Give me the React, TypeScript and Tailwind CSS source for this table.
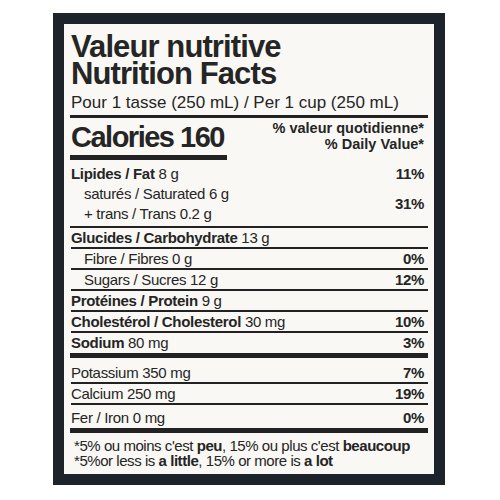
const font = { fontFamily: '"Liberation Sans", Arial, sans-serif' };

type Row = {
  bold?: string;
  text: string;
  dv?: string;
  indent?: boolean;
};

const carbRows: Row[] = [
  { bold: "Glucides / Carbohydrate", text: " 13 g" },
  { text: "Fibre / Fibres 0 g", dv: "0%", indent: true },
  { text: "Sugars / Sucres 12 g", dv: "12%", indent: true },
  { bold: "Protéines / Protein", text: " 9 g" },
  { bold: "Cholestérol / Cholesterol", text: " 30 mg", dv: "10%" },
];

function NutrientRow({ row }: { row: Row }) {
  return (
    <div className="flex h-[19px] items-center justify-between leading-[19px]">
      <span className={row.indent ? "pl-[13px]" : ""}>
        {row.bold && <b className="font-bold">{row.bold}</b>}
        {row.text}
      </span>
      {row.dv && <b className="pr-[4px] font-bold">{row.dv}</b>}
    </div>
  );
}

function Rule({ h = "h-[2px]" }: { h?: string }) {
  return <div className={`${h} w-full bg-[#222]`} />;
}

export default function App() {
  return (
    <div className="h-[500px] w-[500px] bg-white pl-[53px] pt-[13px]" style={font}>
      <div className="h-[472px] w-[392px] bg-[#1d232a] p-[11px]">
        <div className="h-full w-full bg-[#f9f8f4] px-[6px] text-[#252525]">
          {/* title */}
          <div className="pl-[1px] pt-[9px] text-[31px] font-bold leading-[27px] tracking-[-0.9px]">
            <div>Valeur nutritive</div>
            <div>Nutrition Facts</div>
          </div>
          <div className="mt-[6px] pl-[1px] text-[17px] leading-[19px]">
            Pour 1 tasse (250 mL) / Per 1 cup (250 mL)
          </div>
          <div className="mt-[3px]">
            <Rule h="h-[3px]" />
          </div>

          {/* calories */}
          <div className="flex justify-between">
            <div className="pt-[2px]">
              <div className="pl-[1px] text-[29px] font-bold leading-[34px] tracking-[-1.5px]">
                Calories 160
              </div>
              <div className="mt-[1px] h-[5px] w-[157px] bg-[#222]" />
            </div>
            <div className="pr-[4px] pt-[2px] text-right text-[14.5px] font-bold leading-[16px]">
              <div>% valeur quotidienne*</div>
              <div>% Daily Value*</div>
            </div>
          </div>

          {/* fat */}
          <div className="pb-[2px] pl-[1px] pt-[4px] text-[15px] leading-[20px] tracking-[-0.3px]">
            <div className="flex justify-between">
              <span>
                <b className="font-bold">Lipides / Fat</b> 8 g
              </span>
              <b className="pr-[4px] font-bold">11%</b>
            </div>
            <div className="flex items-center justify-between">
              <div className="pl-[13px]">
                <div>saturés / Saturated 6 g</div>
                <div>+ trans / Trans 0.2 g</div>
              </div>
              <b className="pr-[4px] font-bold">31%</b>
            </div>
          </div>
          <Rule />

          <div className="pl-[1px] text-[15px] tracking-[-0.3px]">
            {carbRows.map((row) => (
              <div key={row.text}>
                <NutrientRow row={row} />
                <Rule />
              </div>
            ))}
            <div className="flex h-[19px] items-center justify-between leading-[19px]">
              <span>
                <b className="font-bold">Sodium</b> 80 mg
              </span>
              <b className="pr-[4px] font-bold">3%</b>
            </div>
          </div>
          <div className="mt-[1px]">
            <Rule h="h-[5px]" />
          </div>

          <div className="pl-[1px] pt-[5px] text-[15px] tracking-[-0.3px]">
            <NutrientRow row={{ text: "Potassium 350 mg", dv: "7%" }} />
            <Rule />
            <NutrientRow row={{ text: "Calcium 250 mg", dv: "19%" }} />
            <Rule />
            <div className="flex h-[23px] items-end justify-between pb-[1px] leading-[19px]">
              <span>Fer / Iron 0 mg</span>
              <b className="pr-[4px] font-bold">0%</b>
            </div>
          </div>
          <Rule h="h-[5px]" />

          {/* footnote */}
          <div className="pl-[4px] pt-[6px] text-[15px] leading-[14.5px] tracking-[-0.45px]">
            <div>
              *5% ou moins c'est <b className="font-bold">peu</b>, 15% ou plus c'est{" "}
              <b className="font-bold">beaucoup</b>
            </div>
            <div>
              *5%or less is <b className="font-bold">a little</b>, 15% or more is{" "}
              <b className="font-bold">a lot</b>
            </div>
          </div>
        </div>
      </div>
    </div>
  );
}
